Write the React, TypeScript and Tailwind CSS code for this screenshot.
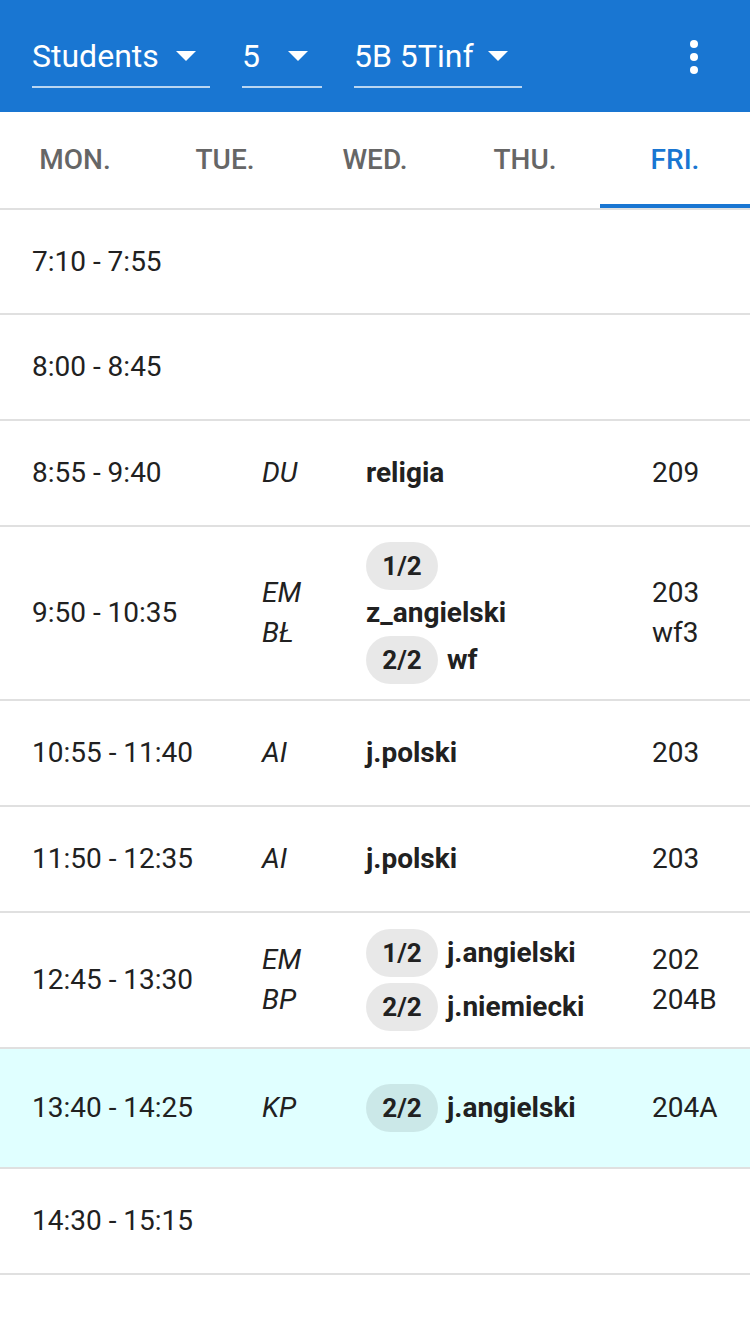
import React from 'react';

type Line = { chip?: string; subject?: string };

type Lesson = {
  time: string;
  teachers?: string[];
  lines?: Line[];
  rooms?: string[];
  height: string;
  current?: boolean;
};

const lessons: Lesson[] = [
  { time: '7:10 - 7:55', height: 'h-[105px]' },
  { time: '8:00 - 8:45', height: 'h-[106px]' },
  { time: '8:55 - 9:40', teachers: ['DU'], lines: [{ subject: 'religia' }], rooms: ['209'], height: 'h-[106px]' },
  {
    time: '9:50 - 10:35',
    teachers: ['EM', 'BŁ'],
    lines: [{ chip: '1/2' }, { subject: 'z_angielski' }, { chip: '2/2', subject: 'wf' }],
    rooms: ['203', 'wf3'],
    height: 'h-[174px]',
  },
  { time: '10:55 - 11:40', teachers: ['AI'], lines: [{ subject: 'j.polski' }], rooms: ['203'], height: 'h-[106px]' },
  { time: '11:50 - 12:35', teachers: ['AI'], lines: [{ subject: 'j.polski' }], rooms: ['203'], height: 'h-[106px]' },
  {
    time: '12:45 - 13:30',
    teachers: ['EM', 'BP'],
    lines: [
      { chip: '1/2', subject: 'j.angielski' },
      { chip: '2/2', subject: 'j.niemiecki' },
    ],
    rooms: ['202', '204B'],
    height: 'h-[136px]',
  },
  {
    time: '13:40 - 14:25',
    teachers: ['KP'],
    lines: [{ chip: '2/2', subject: 'j.angielski' }],
    rooms: ['204A'],
    height: 'h-[120px]',
    current: true,
  },
  { time: '14:30 - 15:15', height: 'h-[106px]' },
];

const days = ['MON.', 'TUE.', 'WED.', 'THU.', 'FRI.'];

function Caret() {
  return (
    <svg width="20" height="10" viewBox="0 0 20 10" aria-hidden="true">
      <polygon points="0,0 20,0 10,10" fill="white" />
    </svg>
  );
}

function Select({ label, width }: { label: string; width: string }) {
  return (
    <div className={`${width} h-[58px] flex items-center justify-between pr-[14px] pb-[4px] border-b-2 border-white/70`}>
      <span className="text-[32px] text-white leading-none">{label}</span>
      <Caret />
    </div>
  );
}

function Chip({ text }: { text: string }) {
  return (
    <span className="w-[72px] h-12 rounded-full bg-black/[0.09] flex items-center justify-center text-[26px] font-bold shrink-0">
      {text}
    </span>
  );
}

function SubjectLines({ lines }: { lines: Line[] }) {
  const multi = lines.length > 1;
  return (
    <div className={`flex flex-col ${lines.length === 2 ? 'gap-[6px]' : ''}`}>
      {lines.map((line, i) =>
        line.chip ? (
          <div key={i} className="flex items-center gap-[9px] h-12">
            <Chip text={line.chip} />
            {line.subject && <span className="font-bold">{line.subject}</span>}
          </div>
        ) : (
          <div key={i} className={`font-bold ${multi ? 'leading-[46px]' : 'leading-9'}`}>
            {line.subject}
          </div>
        )
      )}
    </div>
  );
}

export default function App() {
  return (
    <div className="w-[750px] min-h-[1334px] bg-white text-[#212121] font-['Roboto',sans-serif]">
      <header className="h-[112px] bg-[#1976d2] flex items-start pt-[30px] px-8 gap-8">
        <Select label="Students" width="w-[178px]" />
        <Select label="5" width="w-[80px]" />
        <Select label="5B 5Tinf" width="w-[168px]" />
        <button className="ml-auto self-start mt-[3px] w-12 h-12 flex flex-col items-center justify-center gap-[5px]">
          <span className="w-2 h-2 rounded-full bg-white" />
          <span className="w-2 h-2 rounded-full bg-white" />
          <span className="w-2 h-2 rounded-full bg-white" />
        </button>
      </header>

      <nav className="grid grid-cols-5 h-[98px] border-b-2 border-[#e0e0e0]">
        {days.map((d, i) => {
          const active = i === 4;
          return (
            <div
              key={d}
              className={`relative flex items-center justify-center text-[28px] font-medium ${active ? 'text-[#1976d2]' : 'text-[#666666]'}`}
            >
              {d}
              {active && <span className="absolute left-0 right-0 bottom-0 h-1 bg-[#1976d2]" />}
            </div>
          );
        })}
      </nav>

      {lessons.map((l) => (
        <div
          key={l.time}
          className={`${l.height} flex items-center px-8 text-[28px] border-b-2 border-[#e0e0e0] ${l.current ? 'bg-[#e0ffff]' : ''}`}
        >
          <div className="w-[230px] leading-9">{l.time}</div>
          <div className="w-[104px] italic leading-10">
            {l.teachers?.map((t) => (
              <div key={t}>{t}</div>
            ))}
          </div>
          <div className="w-[286px]">{l.lines && <SubjectLines lines={l.lines} />}</div>
          <div className="flex-1 leading-10">
            {l.rooms?.map((r) => (
              <div key={r}>{r}</div>
            ))}
          </div>
        </div>
      ))}
    </div>
  );
}
